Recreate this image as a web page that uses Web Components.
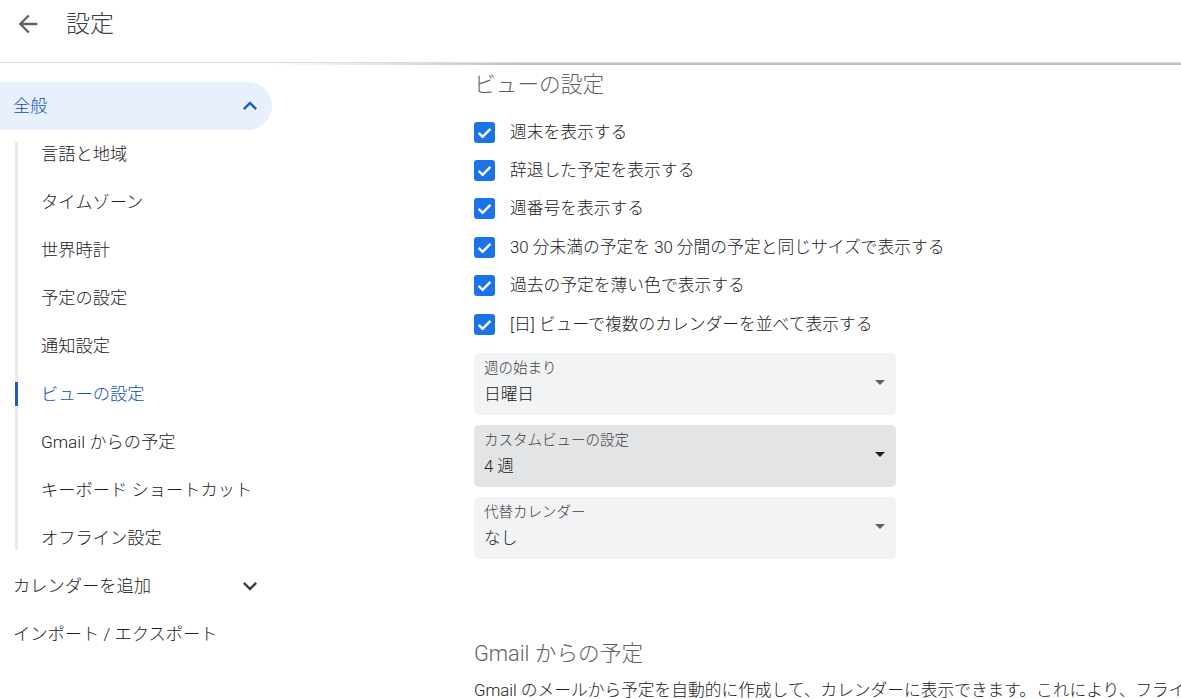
<!DOCTYPE html>
<html lang="ja">
<head>
<meta charset="utf-8">
<title>設定</title>
<style>
  html, body { margin: 0; height: 100%; overflow: hidden; background: #fff; }
  body { font-family: Roboto, "Noto Sans CJK JP", sans-serif; color: #3c4043; }
</style>
</head>
<body>
<settings-page>
  <settings-header slot="header">設定</settings-header>
  <settings-nav slot="nav">
    <nav-item top open selected>全般</nav-item>
    <nav-group>
      <nav-item>言語と地域</nav-item>
      <nav-item>タイムゾーン</nav-item>
      <nav-item>世界時計</nav-item>
      <nav-item>予定の設定</nav-item>
      <nav-item>通知設定</nav-item>
      <nav-item active>ビューの設定</nav-item>
      <nav-item>Gmail からの予定</nav-item>
      <nav-item>キーボード ショートカット</nav-item>
      <nav-item>オフライン設定</nav-item>
    </nav-group>
    <nav-item top closed>カレンダーを追加</nav-item>
    <nav-item top>インポート / エクスポート</nav-item>
  </settings-nav>
  <settings-section heading="ビューの設定">
    <check-row>週末を表示する</check-row>
    <check-row>辞退した予定を表示する</check-row>
    <check-row>週番号を表示する</check-row>
    <check-row>30 分未満の予定を 30 分間の予定と同じサイズで表示する</check-row>
    <check-row>過去の予定を薄い色で表示する</check-row>
    <check-row>[日] ビューで複数のカレンダーを並べて表示する</check-row>
    <select-field label="週の始まり" value="日曜日"></select-field>
    <select-field label="カスタムビューの設定" value="4 週" focused></select-field>
    <select-field label="代替カレンダー" value="なし"></select-field>
  </settings-section>
  <settings-section heading="Gmail からの予定" later>
    <p-line>Gmail のメールから予定を自動的に作成して、カレンダーに表示できます。これにより、フライトやホテルの予約、レストランの予約などを確認できます。</p-line>
  </settings-section>
</settings-page>

<script>
class SettingsPage extends HTMLElement {
  connectedCallback() {
    this.attachShadow({ mode: "open" });
    this.shadowRoot.innerHTML = `
      <style>
        :host { display: flex; flex-direction: column; height: 699px; overflow: hidden; }
        .body { display: flex; flex: 1; min-height: 0; }
        .nav { flex: 0 0 300px; }
        main { flex: 1; min-width: 0; padding: 7px 0 0 174px; box-sizing: border-box; }
        .wrap { position: relative; }
        .shade {
          position: absolute; left: 0; right: 0; top: 0; height: 2px;
          background: linear-gradient(90deg, rgba(190,190,190,0) 270px, rgba(190,190,190,.95) 520px);
        }
      </style>
      <slot name="header"></slot>
      <div class="wrap"><div class="shade"></div></div>
      <div class="body">
        <div class="nav"><slot name="nav"></slot></div>
        <main><slot></slot></main>
      </div>
    `;
  }
}

class SettingsHeader extends HTMLElement {
  connectedCallback() {
    this.attachShadow({ mode: "open" });
    this.shadowRoot.innerHTML = `
      <style>
        :host {
          display: flex; align-items: center; flex: 0 0 auto;
          box-sizing: content-box; padding: 0 0 14px 0; height: 48px;
          border-bottom: 1px solid #dadce0;
        }
        svg { width: 28px; height: 28px; margin-left: 14px; fill: #5f6368; flex: none; }
        .t { margin-left: 24px; font-size: 24px; line-height: 32px; color: #3c4043; font-weight: 300; }
      </style>
      <svg viewBox="0 0 24 24"><path d="M20 11H7.83l5.59-5.59L12 4l-8 8 8 8 1.41-1.41L7.83 13H20v-2z"/></svg>
      <span class="t"><slot></slot></span>
    `;
  }
}

class SettingsNav extends HTMLElement {
  connectedCallback() {
    this.attachShadow({ mode: "open" });
    this.shadowRoot.innerHTML = `
      <style>
        :host { display: block; padding-top: 19px; }
      </style>
      <slot></slot>
    `;
  }
}

class NavGroup extends HTMLElement {
  connectedCallback() {
    this.attachShadow({ mode: "open" });
    this.shadowRoot.innerHTML = `
      <style>
        :host {
          display: flow-root; margin: 12px 0 12px 15px;
          border-left: 3px solid #e8eaed;
        }
        .in { margin: -12px 0; }
      </style>
      <div class="in"><slot></slot></div>
    `;
  }
}

class NavItem extends HTMLElement {
  connectedCallback() {
    const top = this.hasAttribute("top");
    const chevron = this.hasAttribute("open")
      ? "M12 8l-6 6 1.41 1.41L12 10.83l4.59 4.58L18 14z"
      : "M16.59 8.59L12 13.17 7.41 8.59 6 10l6 6 6-6z";
    const hasIcon = this.hasAttribute("open") || this.hasAttribute("closed");
    this.attachShadow({ mode: "open" });
    this.shadowRoot.innerHTML = `
      <style>
        :host {
          display: flex; align-items: center; position: relative;
          height: 48px; box-sizing: border-box; width: 272px;
          padding-left: ${top ? 13 : 23}px; padding-bottom: 4px;
          font-size: 17.25px; font-weight: 300; color: #202124;
        }
        :host([selected]) { background: #e8f0fe; border-radius: 0 24px 24px 0; color: #0b50b4; }
        :host([active]) { color: #0b50b4; }
        :host([active])::before {
          content: ""; position: absolute; left: -3px; top: 12px; bottom: 12px;
          width: 3px; background: #1a5fc0;
        }
        svg { position: absolute; left: 264px; top: 10px; margin-left: -28px; width: 28px; height: 28px; fill: #3c4043; }
        :host([selected]) svg { fill: #1a5fc0; }
      </style>
      <slot></slot>
      ${hasIcon ? `<svg viewBox="0 0 24 24"><path d="${chevron}"/></svg>` : ""}
    `;
  }
}

class SettingsSection extends HTMLElement {
  connectedCallback() {
    this.attachShadow({ mode: "open" });
    this.shadowRoot.innerHTML = `
      <style>
        :host { display: block; }
        :host([later]) { margin-top: 80px; }
        h2 { margin: 0 0 13px; font-size: 21.7px; line-height: 30px; font-weight: 300; color: #5f6368; }
        :host([later]) h2 { margin-bottom: 9px; }
      </style>
      <h2>${this.getAttribute("heading")}</h2>
      <slot></slot>
    `;
  }
}

class CheckRow extends HTMLElement {
  connectedCallback() {
    this.attachShadow({ mode: "open" });
    this.shadowRoot.innerHTML = `
      <style>
        :host { display: flex; align-items: center; height: 38.4px; font-size: 16.77px; font-weight: 300; color: #202124; }
        .box {
          flex: none; width: 21px; height: 21px; margin-right: 15px;
          background: #1a73e8; border-radius: 3px;
          display: flex; align-items: center; justify-content: center;
        }
        svg { width: 17px; height: 17px; fill: none; stroke: #fff; stroke-width: 2.4; }
        .label { white-space: nowrap; margin-top: -3px; }
      </style>
      <span class="box"><svg viewBox="0 0 17 17"><path d="M2.6 8.8l4 4 7.8-8"/></svg></span>
      <span class="label"><slot></slot></span>
    `;
  }
}

class SelectField extends HTMLElement {
  connectedCallback() {
    this.attachShadow({ mode: "open" });
    this.shadowRoot.innerHTML = `
      <style>
        :host {
          display: flex; align-items: center; justify-content: space-between;
          width: 422px; height: 62px; box-sizing: border-box; margin-top: 10px;
          padding: 0 11px 0 10px; border-radius: 5px; background: #f1f3f4;
        }
        :host([focused]) { background: #e3e4e6; }
        .label { display: block; font-size: 14.5px; line-height: 18px; font-weight: 300; color: #3c4043; margin-top: -1px; }
        .value { display: block; font-size: 16.7px; line-height: 24px; font-weight: 300; margin-top: 5px; color: #202124; }
        .caret {
          width: 0; height: 0; margin-top: -4px;
          border-left: 5px solid transparent; border-right: 5px solid transparent;
          border-top: 5px solid #5f6368;
        }
        :host([focused]) .caret { border-top-color: #202124; }
      </style>
      <div>
        <span class="label">${this.getAttribute("label")}</span>
        <span class="value">${this.getAttribute("value")}</span>
      </div>
      <span class="caret"></span>
    `;
  }
}

class PLine extends HTMLElement {
  connectedCallback() {
    this.attachShadow({ mode: "open" });
    this.shadowRoot.innerHTML = `
      <style>
        :host { display: block; font-size: 16.73px; font-weight: 300; line-height: 24px; color: #202124; white-space: nowrap; overflow: hidden; }
      </style>
      <slot></slot>
    `;
  }
}

customElements.define("settings-page", SettingsPage);
customElements.define("settings-header", SettingsHeader);
customElements.define("settings-nav", SettingsNav);
customElements.define("nav-group", NavGroup);
customElements.define("nav-item", NavItem);
customElements.define("settings-section", SettingsSection);
customElements.define("check-row", CheckRow);
customElements.define("select-field", SelectField);
customElements.define("p-line", PLine);
</script>
</body>
</html>
